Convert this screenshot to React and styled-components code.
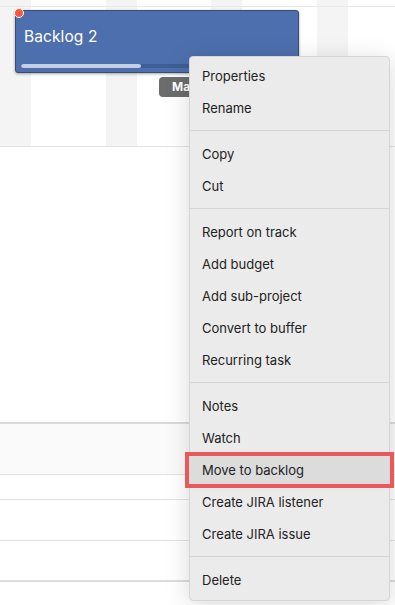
import React from 'react';
import styled, { createGlobalStyle } from 'styled-components';

const GlobalStyle = createGlobalStyle`
    html, body {
        margin: 0;
        padding: 0;
        background: #ffffff;
    }
    body {
        font-family: Inter, 'Noto Sans', 'Liberation Sans', sans-serif;
    }
`;

const Screen = styled.div`
    position: relative;
    width: 395px;
    height: 605px;
    overflow: hidden;
    display: flex;
    flex-direction: column;
    background: #ffffff;
`;

const Timeline = styled.div`
    height: 146px;
    flex-shrink: 0;
    display: flex;
    flex-direction: column;
    border-bottom: 1px solid #e4e4e4;
    background-image: repeating-linear-gradient(
        90deg,
        #f4f4f4 0px,
        #f4f4f4 31px,
        #ffffff 31px,
        #ffffff 105.7px
    );
`;

const TimelineHeader = styled.div`
    height: 6px;
    flex-shrink: 0;
    border-bottom: 1px solid #e8e8e8;
`;

const TaskRow = styled.div`
    display: flex;
    padding: 3px 0 0 15px;
`;

const TaskBar = styled.div`
    position: relative;
    box-sizing: border-box;
    width: 284px;
    height: 63px;
    display: flex;
    flex-direction: column;
    justify-content: space-between;
    padding: 17px 8px 4px 8px;
    background: #4e6fae;
    border: 1px solid #3b4d6e;
    border-radius: 3px;
    box-shadow: 0 1px 3px rgba(0, 0, 0, 0.35);
    color: #ffffff;
`;

const TaskTitle = styled.div`
    font-size: 15.5px;
    line-height: 18px;
    font-weight: 400;
    letter-spacing: 0.1px;
`;

const Progress = styled.div`
    height: 4px;
    margin: 0 -3px;
    border-radius: 2px;
    background: #3f5d96;
    overflow: hidden;
`;

const ProgressFill = styled.div`
    height: 100%;
    border-radius: 2px;
    background: #c5cfe2;
`;

const StatusDot = styled.span`
    position: absolute;
    left: -2px;
    top: -3px;
    width: 8px;
    height: 8px;
    border-radius: 50%;
    background: #f2593d;
    border: 1.5px solid #ffffff;
`;

/* label under the bar; the menu hides the rest of it */
const Tag = styled.span`
    position: absolute;
    left: 143px;
    top: 66px;
    box-sizing: border-box;
    width: 38px;
    height: 20px;
    padding-left: 13px;
    overflow: hidden;
    border-radius: 4px;
    background: #6c6c6c;
    color: #ffffff;
    font-size: 12px;
    font-weight: 700;
    line-height: 20px;
    white-space: nowrap;
`;

const Spacer = styled.div`
    flex: 1;
`;

const Table = styled.div`
    flex-shrink: 0;
    display: flex;
    flex-direction: column;
    border-top: 2px solid #dadada;
    margin-bottom: 23px;
`;

const TableRow = styled.div`
    height: ${props => props.height}px;
    background: ${props => (props.header ? '#fafafa' : '#ffffff')};
    border-bottom: ${props => (props.last ? '2px solid #dddddd' : '1px solid #e3e3e3')};
`;

const Menu = styled.div`
    position: absolute;
    left: 189px;
    top: 56px;
    width: 201px;
    box-sizing: border-box;
    padding: 3px 0 4px;
    background: #ebebeb;
    border: 1px solid #d5d5d5;
    border-radius: 4px;
    box-shadow: 0 4px 24px rgba(0, 0, 0, 0.15);
`;

const MenuItem = styled.div`
    position: relative;
    height: 32px;
    padding: 0 12px;
    font-size: 13px;
    line-height: 32px;
    color: #222222;
    white-space: nowrap;
    background: ${props => (props.active ? '#dcdcdc' : 'transparent')};

    ${props =>
        props.active &&
        `
        &::after {
            content: '';
            position: absolute;
            left: -5px;
            right: -5px;
            top: -2px;
            bottom: -2px;
            border: 4.5px solid #e8595c;
            pointer-events: none;
        }
    `}
`;

const Separator = styled.div`
    height: 1px;
    margin: 6px 0 7px;
    background: #d4d4d4;
`;

const menuGroups = [
    ['Properties', 'Rename'],
    ['Copy', 'Cut'],
    ['Report on track', 'Add budget', 'Add sub-project', 'Convert to buffer', 'Recurring task'],
    ['Notes', 'Watch', 'Move to backlog', 'Create JIRA listener', 'Create JIRA issue'],
    ['Delete'],
];

const ContextMenu = () => (
    <Menu>
        {menuGroups.map((group, i) => (
            <React.Fragment key={i}>
                {i > 0 && <Separator />}
                {group.map(label => (
                    <MenuItem key={label} active={label === 'Move to backlog'}>
                        {label}
                    </MenuItem>
                ))}
            </React.Fragment>
        ))}
    </Menu>
);

const App = () => {
    const progress = 0.44;

    return (
        <>
            <GlobalStyle />
            <Screen>
                <Timeline>
                    <TimelineHeader />
                    <TaskRow>
                        <TaskBar>
                            <StatusDot />
                            <TaskTitle>Backlog 2</TaskTitle>
                            <Progress>
                                <ProgressFill style={{ width: `${progress * 100}%` }} />
                            </Progress>
                            <Tag>Ma</Tag>
                        </TaskBar>
                    </TaskRow>
                </Timeline>
                <Spacer />
                <Table>
                    <TableRow header height={50} />
                    <TableRow height={24} />
                    <TableRow height={40} />
                    <TableRow last height={39} />
                </Table>
                <ContextMenu />
            </Screen>
        </>
    );
};

export default App;
